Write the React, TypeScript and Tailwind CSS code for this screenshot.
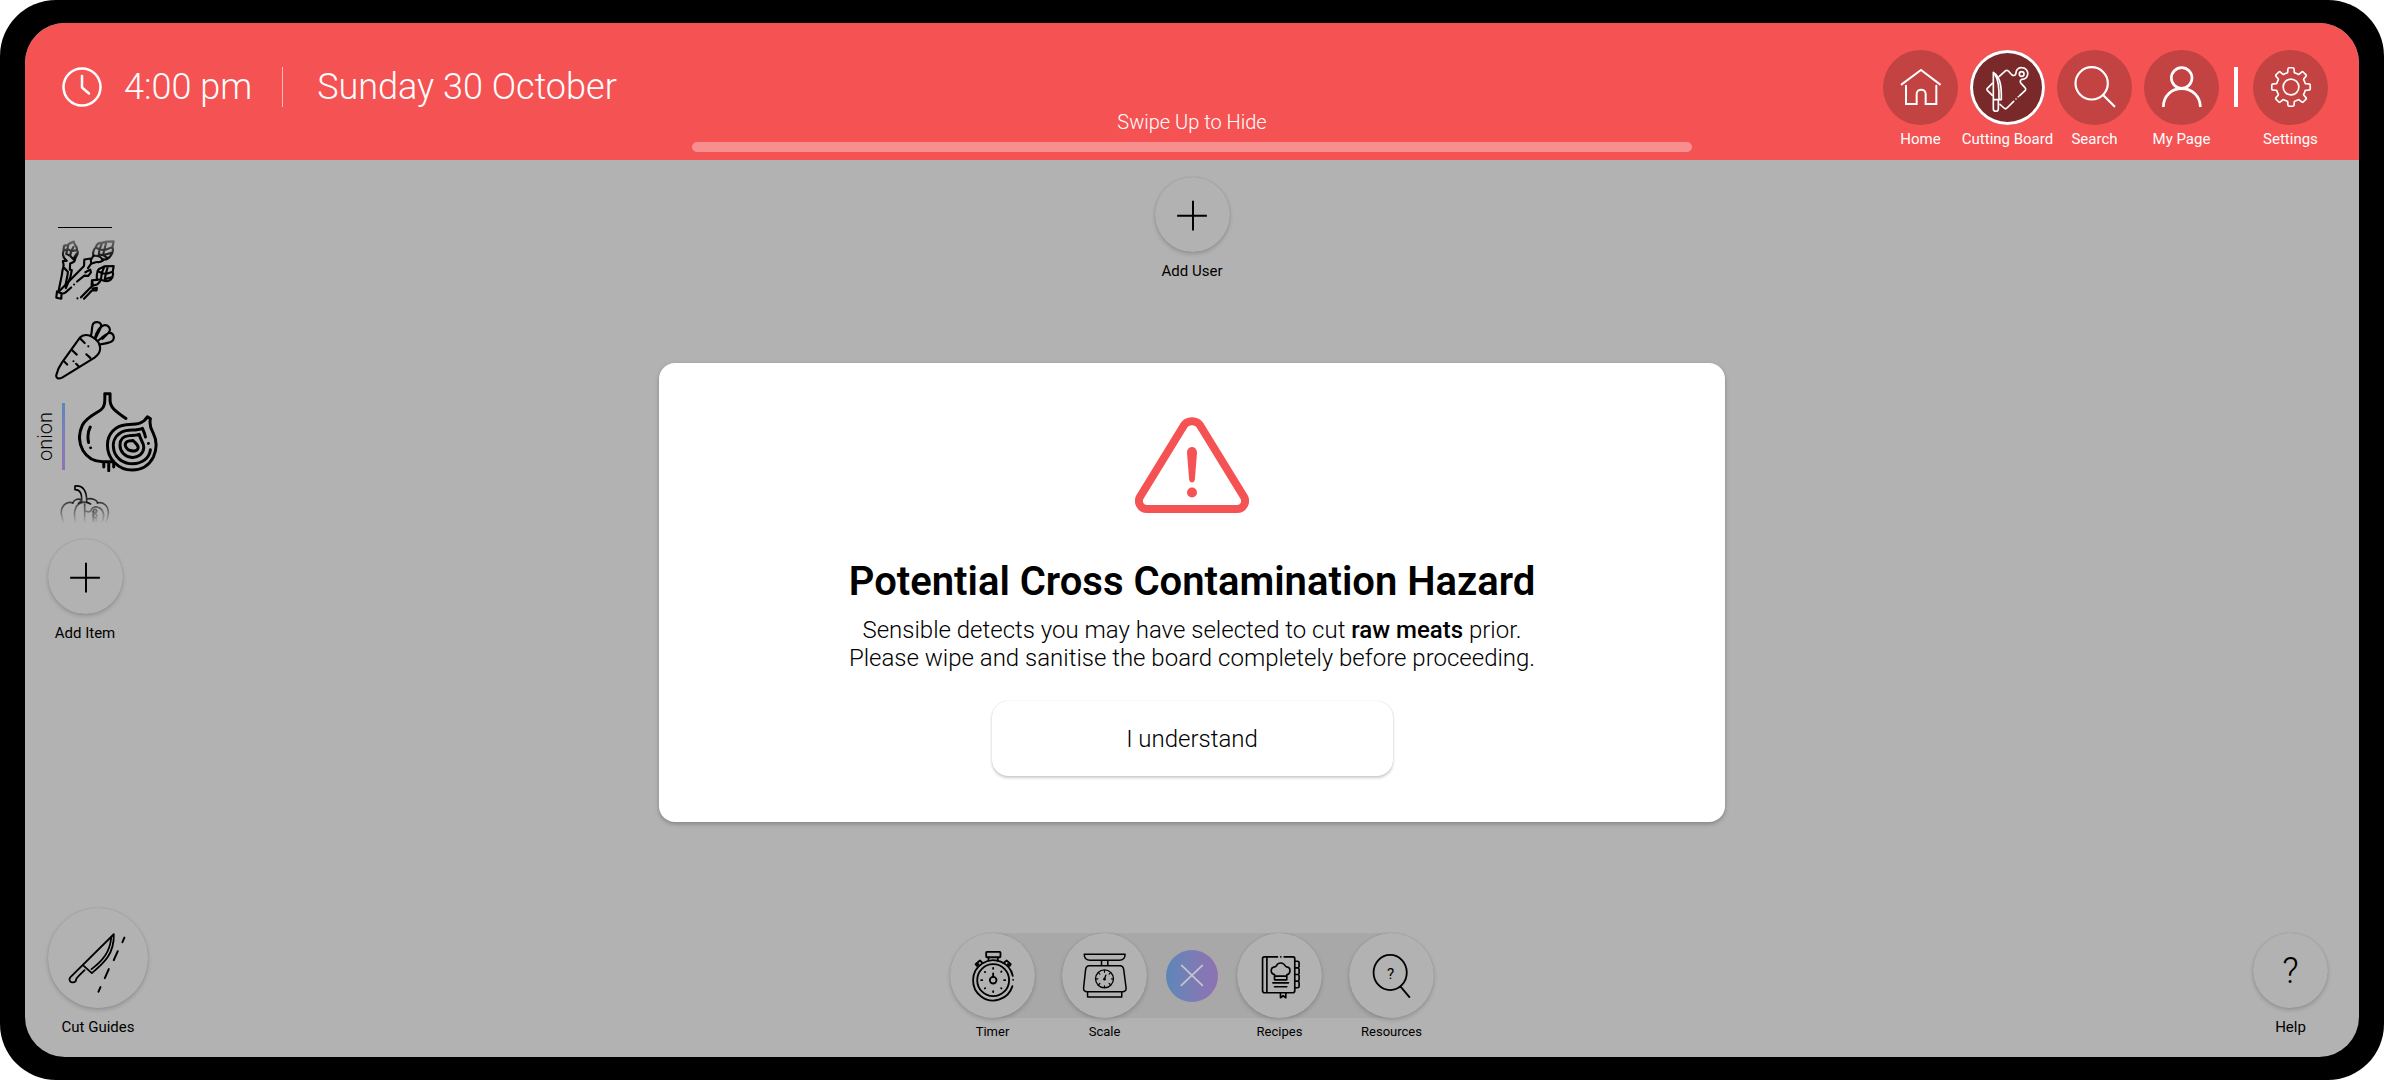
import type { ReactNode } from "react";

const ROUND = "rounded-full bg-[#b2b2b2] shadow-[0_2px_4px_rgba(0,0,0,0.18),0_0_1px_rgba(0,0,0,0.2)]";

function Icon({ box, sw, children }: { box: string; sw: number; children: ReactNode }) {
  return (
    <svg viewBox={box} className="size-full" fill="none" stroke="currentColor" strokeWidth={sw} strokeLinecap="round" strokeLinejoin="round" aria-hidden="true">
      {children}
    </svg>
  );
}

function HomeIcon() {
  return (
    <Icon box="69 150 225 225" sw={6}>
      <path d="M125 253 183 210l57 43M138 257v55h32v-30c0-17 27-17 27 0v30h32v-55" strokeLinejoin="miter" />
    </Icon>
  );
}

function BoardIcon() {
  return (
    <Icon box="329 150 225 225" sw={5}>
      <path d="M399 217c18 12 25 32 24 82h-24zM404 224c10 14 13 36 12 74M399 299v28c0 9 15 9 15 0v-28" />
      <path d="M396 250l-15 15c-2 2-2 4 0 6l15 15M417 229l19-17c3-2 5-2 8 1l11 12c7 4 12-1 12-7 0-10 9-16 18-15 12 1 19 11 17 21-2 9-9 14-17 14-6 2-7 8-2 13l11 12c3 3 3 5 1 8l-17 16M460 304l-20 20c-3 3-6 3-9 0l-12-11" />
      <circle cx="484" cy="222" r="7" />
      <path d="M474 290h.1M467 297h.1" />
    </Icon>
  );
}

function SearchIcon() {
  return (
    <Icon box="589 150 225 225" sw={6.5}>
      <circle cx="693" cy="250" r="48.5" />
      <path d="M728 286l33 33" />
    </Icon>
  );
}

function UserIcon() {
  return (
    <Icon box="850 150 225 225" sw={8}>
      <circle cx="963" cy="234" r="31" />
      <path d="M908 321c0-33 24-55 55-55s56 22 56 55" strokeLinecap="butt" />
    </Icon>
  );
}

const GEAR = Array.from({ length: 8 }, (_, i) => {
  const at = (r: number, deg: number) => {
    const a = ((i * 45 + deg - 90) * Math.PI) / 180;
    return `${(1290 + r * Math.cos(a)).toFixed(1)} ${(261 + r * Math.sin(a)).toFixed(1)}`;
  };
  return `${i ? "L" : "M"}${at(44, -17)}Q${at(43, -13)} ${at(47, -12)}L${at(54, -10)}Q${at(58, -9)} ${at(58, -6)}L${at(58, 6)}Q${at(58, 9)} ${at(54, 10)}L${at(47, 12)}Q${at(43, 13)} ${at(44, 17)}`;
}).join("") + "Z";

function GearIcon() {
  return (
    <Icon box="1176 150 225 225" sw={5}>
      <path d={GEAR} />
      <circle cx="1290" cy="261" r="23.5" />
    </Icon>
  );
}

function PlusIcon() {
  return (
    <Icon box="53 30 227 227" sw={6}>
      <path d="M120 147h90M168 102v90" strokeLinecap="butt" />
    </Icon>
  );
}

function KnifeIcon() {
  return (
    <Icon box="144 83 301 301" sw={5.5}>
      <path d="M342 162 211 292c-6 7 0 16 9 15 6 0 8-3 9-9 1-5 5-8 9-12l16-16M249 255l27 24c36-30 68-58 66-117M275 267c32-24 55-50 59-93" />
      <path d="M374 172l-6 14M354 213l-12 27M327 267l-12 27M302 321l-6 14" strokeWidth="6" />
    </Icon>
  );
}

function TimerIcon() {
  return (
    <Icon box="62 68 256 256" sw={5.5}>
      <rect x="171" y="125" width="43" height="16" rx="2" />
      <path d="M178 142v9M206 142v9M143 167l-4-5 13-11 6 5M242 167l3-5-12-11-7 5M143 167l5-5M241 167l-5-5" />
      <path d="M251 197a60.500 60.500 0 1 0-1 31M252 209h.1" />
      <circle cx="192" cy="210" r="48" />
      <circle cx="192" cy="210" r="10" />
      <path d="M192 190v9" />
      <path d="M192 173v3M192 243v3M156 210h3M225 210h3M167 185l1 1M216 185l1-1M167 235l1-1M216 234l1 1" />
    </Icon>
  );
}

function ScaleIcon() {
  return (
    <Icon box="398 68 256 256" sw={4.5}>
      <path d="M465 132h123c0 12-8 18-18 18h-87c-10 0-18-6-18-18zM517 151v15M536 151v15M480 167h93c8 0 10 5 11 12l7 54c1 8-4 12-11 12H474c-7 0-12-4-11-12l6-54c1-7 4-12 11-12zM475 246v15h103v-15" />
      <circle cx="526" cy="206" r="27" strokeWidth="4" />
      <path d="M526 181v5M526 227v4M501 206h5M547 206h4M509 189l3 3M543 189l-3 3M509 223l3-3M543 223l-3-3" strokeWidth="3.500" />
      <circle cx="526" cy="207" r="4" fill="currentColor" stroke="none" />
      <path d="M526 206l4-11" strokeWidth="4" />
    </Icon>
  );
}

function RecipesIcon() {
  return (
    <Icon box="261 68 256 256" sw={5}>
      <path d="M383 140h-40c-4 0-5 2-5 6v96c0 4 2 6 6 6h85c4 0 6-2 6-6v-97c0-4-2-5-6-5h-26M393 140h.1M351 141v106" />
      <path d="M436 153h7c4 0 5 1 5 4v12c0 3-1 4-5 4h-7M443 173c4 0 5 1 5 4v12c0 3-1 4-5 4h-7M443 193c4 0 5 1 5 4v12c0 3-1 4-5 4h-7M443 213c4 0 5 1 5 4v12c0 3-1 4-5 4h-7M392 249v14l8-6 8 6v-14" />
      <path d="M374 209v-16c-14-3-13-22 1-23 4 0 6-7 9-9 5-3 12-3 17 0 4 2 5 9 9 9 14 1 14 20 1 24v15zM375 198h35M369 218h47M374 230h37" />
    </Icon>
  );
}

function ResourcesIcon() {
  return (
    <Icon box="597 68 256 256" sw={5.5}>
      <ellipse cx="721" cy="187" rx="50" ry="53" />
      <path d="M753 230l26 31" />
      <text x="722" y="207" textAnchor="middle" fontSize="46" fill="currentColor" stroke="none" className="font-['Roboto',sans-serif]">?</text>
    </Icon>
  );
}

function Asparagus() {
  return (
    <svg viewBox="77 89 182 182" className="size-[60px]" fill="none" stroke="url(#fade-in)" strokeWidth="6.5" strokeLinecap="round" strokeLinejoin="round" aria-hidden="true">
      <defs>
        <linearGradient id="fade-in" gradientUnits="userSpaceOnUse" x1="0" y1="85" x2="0" y2="150">
          <stop offset="0" stopColor="#000" stopOpacity="0.35" />
          <stop offset="1" stopColor="#000" />
        </linearGradient>
      </defs>
      <path d="M112 152c-9-8-13-20-9-31 0-8 1-12 2-15l11-2c5-7 11-8 18-10 1 6 3 9 6 13 3 3 4 7 3 12 5 6 3 13-1 19-2 6-5 8-7 11M103 122l12-6 2-11M115 116l11 7 7-13M126 123l15-3M126 123l-3 14-12-6 4-15M123 137l9 10 11-17" />
      <path d="M112 152l-11 1c2 7 3 12 1 20-3 8-3 14-4 21l-10 49M138 146c0 8-4 10-15 14l-1 19 6 1-4 21-14 34M103 172l13 13-1 10-7 35" />
      <path d="M83 245l14 6-1 16-15-3zM97 251c4 1 8 0 12-3l17-15M92 242l73-74M135 224h.1M144 215l22-18 12 1 8-11-2-8-15 8M165 168l1-20 19-3 2 15-10 14M188 146l6-10M207 156c8 1 11-2 17-6" />
      <path d="M187 160c6 1 13-6 20-4M194 137c-4-12 0-20 7-26 2-9 10-14 20-14l12-3 22-1-4 18c4 10 0 20-7 28-9 11-18 10-24 8-5-9-17-11-26-10M200 112l12 5 8-19M212 117l-2 16M212 117l14 3 7-25M226 120l24-9M226 120l-3 15-13-2M223 135l14 9M223 135l24-7" />
      <path d="M204 210c0-9-1-13 1-22 1-7 3-10 10-13l11-6 29-1-3 18c3 9-1 18-7 24-7 6-16 4-24 1-6-3-11-3-17-1M207 184l12 5 7-18M219 189l12 3 6-21M231 192l21-7M231 192l-3 16M219 189l-2 16M228 208l23-7" />
      <path d="M204 210l-15 1-1 19-32 33M145 266h.1M165 267l24-25h14l1-8-13 2M190 213l2 15 14-5 8-9" />
    </svg>
  );
}

function Carrot() {
  return (
    <svg viewBox="75 332 182 182" className="size-[60px]" fill="none" stroke="#000" strokeWidth="6.5" strokeLinecap="round" strokeLinejoin="round" aria-hidden="true">
      <path d="M150 386c10-11 26-11 39-2 15 9 23 20 23 34 0 13-7 21-17 28l-97 60c-12 6-21 4-19-7 3-15 9-27 17-38zM184 380c5-17 1-31 8-38 8-7 22-3 23 6l-1 7M196 387c5-20 16-37 28-39 12-2 19 8 17 17-3 8-15 15-22 24M214 355l-17 35M241 371c12 1 15 14 10 22-6 10-24 9-42 14M240 371c-12 5-23 15-36 25" />
      <path d="M152 389l13 13M127 424l14 13M103 458l9 9M170 436l12 11M139 465l9 9M176 412h.1M131 457h.1" />
    </svg>
  );
}

function Onion() {
  return (
    <svg viewBox="144 545 242 242" className="size-20 shrink-0" fill="none" stroke="#000" strokeWidth="9" strokeLinecap="round" strokeLinejoin="round" aria-hidden="true">
      <path d="M289 625c-26-18-48-30-48-56v-19h-16c1 28 0 40-12 49-20 14-45 23-56 47-12 26-10 54 2 76 13 22 34 34 60 34h31M181 651c-9 17-8 32-5 47M182 714h.1" />
      <path d="M222 760v12M237 760v23M252 760v12" />
      <path d="M354 620l9 6c-3 15 0 29 8 42 12 24 11 52 1 74-14 27-38 39-64 39-42 0-75-34-75-75 0-35 24-59 57-62 28-2 50 0 64-24z" />
      <path d="M348 681c-2-10-5-17-9-26-22 10-43 0-64 12-22 13-28 35-22 56 7 25 31 39 56 39 29 0 51-17 54-42M357 701h.1M329 673c2 14 14 24 14 40-1 19-17 31-35 30-21-1-37-17-37-37 0-18 11-28 28-29 11-1 20 0 30-4zM311 692c6 7 15 13 15 21-1 10-13 13-24 9-11-3-19-16-13-24 5-7 14-5 22-6z" />
    </svg>
  );
}

function Pepper() {
  return (
    <svg viewBox="93 822 150 120" className="h-10 w-[50px]" fill="none" stroke="url(#fade-out)" strokeWidth="5" strokeLinecap="round" strokeLinejoin="round" aria-hidden="true">
      <defs>
        <linearGradient id="fade-out" gradientUnits="userSpaceOnUse" x1="0" y1="845" x2="0" y2="940">
          <stop offset="0" stopColor="#000" />
          <stop offset="1" stopColor="#000" stopOpacity="0" />
        </linearGradient>
      </defs>
      <path d="M158 876c1-22-3-38-20-37v-11c25-3 36 16 35 48M131 879c4-9 14-14 26-10M174 867c14-3 28 1 32 11M158 872l-10 8M173 876l10 5" />
      <path d="M132 879c-20-8-37 11-35 32 1 14 6 22 9 31M141 942c-8-27-5-51 8-60 12-8 26-6 36 0M205 879c20-6 34 12 33 31-1 14-6 22-9 32M167 882v60M168 902c6 4 12 4 17 2 3-10 12-16 22-12 18 5 22 28 10 46M192 905v37" />
      <circle cx="198" cy="903" r="5" />
      <circle cx="198" cy="917" r="5" />
      <circle cx="198" cy="930" r="5" />
    </svg>
  );
}

function NavButton({ label, active, children }: { label: string; active?: boolean; children: ReactNode }) {
  return (
    <button type="button" className="flex w-[75px] flex-col items-center gap-1 text-[15px] leading-5 whitespace-nowrap text-white">
      <span className={active ? "size-[75px] rounded-full bg-[#7a292a] ring-3 ring-white ring-inset" : "size-[75px] rounded-full bg-[#c34242]"}>{children}</span>
      <span>{label}</span>
    </button>
  );
}

function RoundButton({ label, children }: { label: string; children: ReactNode }) {
  return (
    <button type="button" className="flex flex-col items-center gap-[9px] text-[15px] leading-5 whitespace-nowrap">
      <span className={`${ROUND} flex size-[75px] items-center justify-center`}>{children}</span>
      <span>{label}</span>
    </button>
  );
}

function DockButton({ label, children }: { label: string; children: ReactNode }) {
  return (
    <button type="button" className="relative flex w-[85px] flex-col items-center gap-1 text-[13px] leading-5">
      <span className={`${ROUND} size-[85px]`}>{children}</span>
      <span>{label}</span>
    </button>
  );
}

export default function App() {
  return (
    <div className="bg-white font-['Roboto',sans-serif] text-black">
      <div className="flex min-h-screen flex-col rounded-[56px] bg-black px-[25px] py-[23px]">
        <div className="flex flex-1 flex-col overflow-hidden rounded-[40px] bg-[#b2b2b2]">
          <header className="grid h-[137px] grid-cols-[2fr_3fr_2fr] bg-[#f55353] text-white">
            <div className="mt-11 flex h-10 items-center self-start pl-[37px] text-4xl font-light whitespace-nowrap">
              <svg viewBox="0 0 40 40" className="size-10" fill="none" stroke="currentColor" strokeWidth="2.5" strokeLinecap="round" aria-hidden="true">
                <circle cx="20" cy="20" r="18.500" />
                <path d="M20 9v11.500l7 6" strokeLinejoin="round" />
              </svg>
              <time className="ml-[22px]">4:00 pm</time>
              <span className="mr-[34px] ml-[30px] h-10 w-px bg-white/60" />
              <span>Sunday 30 October</span>
            </div>
            <div className="flex flex-col items-center justify-end gap-1.5 pb-2">
              <p className="text-xl leading-7 font-light">Swipe Up to Hide</p>
              <div className="h-2.5 w-full rounded-full bg-white/35" />
            </div>
            <nav className="flex items-start justify-end gap-3 pt-[27px] pr-[31px]">
              <NavButton label="Home"><HomeIcon /></NavButton>
              <NavButton label="Cutting Board" active><BoardIcon /></NavButton>
              <NavButton label="Search"><SearchIcon /></NavButton>
              <NavButton label="My Page"><UserIcon /></NavButton>
              <span className="mx-[3px] mt-[17px] h-10 w-1 bg-white" />
              <NavButton label="Settings"><GearIcon /></NavButton>
            </nav>
          </header>

          <main className="relative grid flex-1 grid-cols-[1fr_auto_1fr]">
            <aside className="flex flex-col items-start justify-between pt-[67px] pb-5 pl-[23px]">
              <div className="flex w-[74px] flex-col items-center">
                <div className="h-px w-[54px] bg-black" />
                <button type="button" aria-label="asparagus" className="mt-3"><Asparagus /></button>
                <button type="button" aria-label="carrot" className="mt-5"><Carrot /></button>
                <button type="button" className="mt-3 -ml-4 flex items-center self-start">
                  <span className="flex items-center pt-2">
                    <span className="w-[26px] rotate-180 text-xl leading-[26px] font-light [writing-mode:vertical-rl]">onion</span>
                    <span className="mr-[13px] ml-1 h-[67px] w-[3px] bg-linear-to-b from-[#5b87ba] to-[#9272b3]" />
                  </span>
                  <Onion />
                </button>
                <button type="button" aria-label="pepper" className="mt-3 mb-[15px]"><Pepper /></button>
                <RoundButton label="Add Item"><PlusIcon /></RoundButton>
              </div>
              <button type="button" className="flex flex-col items-center gap-[9px] text-[15px] leading-5">
                <span className={`${ROUND} size-[100px]`}><KnifeIcon /></span>
                <span>Cut Guides</span>
              </button>
            </aside>

            <div className="flex flex-col items-center justify-between pt-[17px] pb-[15px]">
              <RoundButton label="Add User"><PlusIcon /></RoundButton>
              <div className="relative flex items-start gap-[27px]">
                <div className="absolute inset-x-[42px] top-0 h-[85px] bg-[#a8a8a8]" />
                <DockButton label="Timer"><TimerIcon /></DockButton>
                <DockButton label="Scale"><ScaleIcon /></DockButton>
                <button type="button" aria-label="Close" className="relative -mx-2 mt-[17px] size-[52px] rounded-full bg-linear-to-r from-[#5b87b8] to-[#9071b2] text-[#c6c6d2]">
                  <Icon box="51 120 156 156" sw={5}>
                    <path d="M98 166l62 60M160 166l-63 60" />
                  </Icon>
                </button>
                <DockButton label="Recipes"><RecipesIcon /></DockButton>
                <DockButton label="Resources"><ResourcesIcon /></DockButton>
              </div>
            </div>

            <div className="flex items-end justify-end pr-[31px] pb-5">
              <RoundButton label="Help">
                <span className="text-4xl font-light">?</span>
              </RoundButton>
            </div>

            <div className="absolute inset-0 flex items-start justify-center pt-[203px]">
              <section role="alertdialog" aria-labelledby="hazard-title" className="flex w-full max-w-[1066px] flex-col items-center rounded-2xl bg-white pt-[54px] pb-[46px] text-center shadow-[0_2px_4px_rgba(0,0,0,0.25)]">
                <svg viewBox="0 0 114 96" className="h-24 w-[114px] text-[#f55353]" fill="none" aria-hidden="true">
                  <path d="M48.500 9C52 2.500 62 2.500 65.500 9L108.500 79c4 6 0 13-6.500 13H12c-6.500 0-10.500-7-6.500-13z" stroke="currentColor" strokeWidth="8" />
                  <path d="M52 36c0-8 10-8 10 0l-2 25c0 6-6 6-6 0z" fill="currentColor" />
                  <circle cx="57" cy="75.500" r="5" fill="currentColor" />
                </svg>
                <h1 id="hazard-title" className="mt-[45px] text-[40px] leading-[48px] font-semibold">Potential Cross Contamination Hazard</h1>
                <p className="mt-2.5 text-2xl leading-7 font-light">
                  Sensible detects you may have selected to cut <strong className="font-medium">raw meats</strong> prior.
                  <br />
                  Please wipe and sanitise the board completely before proceeding.
                </p>
                <button type="button" className="mt-[29px] h-[75px] w-[401px] rounded-2xl bg-white text-2xl font-light shadow-[0_2px_3px_rgba(0,0,0,0.2),0_0_1px_rgba(0,0,0,0.2)]">I understand</button>
              </section>
            </div>
          </main>
        </div>
      </div>
    </div>
  );
}
